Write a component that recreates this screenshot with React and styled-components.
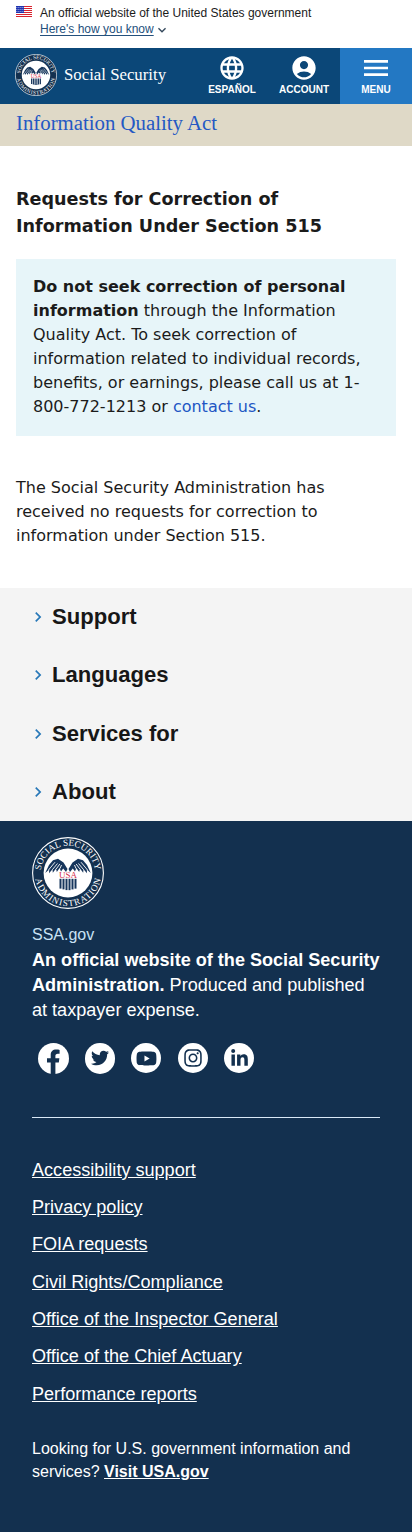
import React from "react";
import styled, { createGlobalStyle } from "styled-components";
import { MdLanguage, MdAccountCircle, MdMenu, MdExpandMore, MdChevronRight } from "react-icons/md";
import { FaTwitter, FaYoutube, FaInstagram, FaLinkedinIn } from "react-icons/fa";

const sans = '"Liberation Sans", Arial, sans-serif';
const serif = '"Liberation Serif", "Times New Roman", serif';
const navy = "#13304f";

const GlobalStyle = createGlobalStyle`
  *, *::before, *::after { box-sizing: border-box; }
  body { margin: 0; background: #fff; color: #1b1b1b; font-family: ${sans}; }
  h1, h2, p, ul { margin: 0; padding: 0; }
  ul { list-style: none; }
  svg { display: block; flex: none; }
`;

const Banner = styled.div`
  display: flex;
  gap: 8px;
  height: 48px;
  padding: 5px 16px 0;
  font-size: 12px;
  line-height: 16px;
`;

const FlagSvg = styled.svg`
  margin-top: 1px;
`;

const HowLink = styled.a`
  display: flex;
  align-items: center;
  height: 16px;
  color: #24507c;
  span {
    text-decoration: underline;
    text-underline-offset: 2px;
  }
  svg {
    margin: 2px 0 0;
    color: #33475b;
  }
`;

const Header = styled.header`
  display: flex;
  height: 56px;
  background: #0b4778;
  color: #fff;
`;

const Brand = styled.a`
  flex: 1;
  display: flex;
  align-items: center;
  gap: 7px;
  padding: 0 0 2px 15px;
  font: 16.8px ${serif};
`;

const NavButton = styled.button`
  display: flex;
  flex-direction: column;
  align-items: center;
  width: 72px;
  padding: 0;
  border: 0;
  background: ${(p) => (p.$active ? "#2378c3" : "transparent")};
  color: #fff;
  font: bold 10px/12px ${sans};
`;

const NavIcon = styled.span`
  display: flex;
  align-items: center;
  justify-content: center;
  height: 32px;
  margin: 4px 0 0;
`;

const TitleBar = styled.div`
  height: 42px;
  padding: 0 16px;
  background: #dfd9c7;
  color: #2458c4;
  font: 20.8px/38px ${serif};
`;

const Main = styled.main`
  height: 442px;
  padding: 40px 16px 0;
  font: 16px/24px "DejaVu Sans", sans-serif;
`;

const Heading = styled.h1`
  font-size: 17.6px;
  line-height: 27px;
`;

const Notice = styled.div`
  margin: 19px 0 40px;
  height: 177px;
  padding: 16px 17px 0;
  background: #e7f5f9;
`;

const TextLink = styled.a`
  color: #2155c4;
`;

const Sections = styled.nav`
  display: flex;
  flex-direction: column;
  height: 233px;
  background: #f4f4f4;
`;

const Section = styled.h2`
  flex: 1;
  display: flex;
  align-items: center;
  gap: 4px;
  padding-left: 28px;
  color: #171717;
  font-size: 22.08px;
  line-height: 26px;
  svg {
    color: #2878b8;
  }
`;

const Footer = styled.footer`
  height: 711px;
  padding: 16px 32px 0;
  background: ${navy};
  color: #fff;
`;

const Domain = styled.p`
  margin-top: 17px;
  color: #c9e1f4;
  font-size: 16px;
  line-height: 18px;
`;

const About = styled.p`
  margin: 4px -4px 0 0;
  font-size: 18.08px;
  line-height: 25px;
`;

const Socials = styled.div`
  display: flex;
  gap: 15.5px;
  height: 31px;
  margin: 20px 0 43px 6px;
`;

const SocialSlot = styled.a`
  width: 31px;
`;

const SocialBadge = styled.span`
  display: flex;
  align-items: center;
  justify-content: center;
  width: ${(p) => p.$size}px;
  height: ${(p) => p.$size}px;
  border-radius: 50%;
  background: #fff;
  color: ${navy};
`;

const Links = styled.ul`
  border-top: 1px solid #d9e8f6;
  padding-top: 33.7px;
`;

const LinkItem = styled.li`
  height: 37.35px;
  font-size: 18.08px;
  line-height: 37.3px;
  a {
    text-decoration: underline;
  }
`;

const UsaGov = styled.p`
  margin-top: 24px;
  font-size: 16px;
  line-height: 23.3px;
  b {
    text-decoration: underline;
  }
`;

const Flag = () => (
  <FlagSvg width="16" height="11" viewBox="0 0 16 11">
    <rect width="16" height="11" fill="#fff" />
    {[0, 2, 4, 6, 8, 10].map((y) => (
      <rect key={y} y={y} width="16" height="1" fill="#d8232f" />
    ))}
    <rect width="8" height="7" fill="#1d33b1" />
    {[1, 3, 5].map((y) =>
      [1, 3, 5, 7].map((x) => (
        <rect key={`${x}-${y}`} x={x - 0.5} y={y} width="0.8" height="0.8" fill="#fff" />
      ))
    )}
  </FlagSvg>
);

const FacebookMark = () => (
  <svg width="31" height="31" viewBox="0 0 31 31">
    <circle cx="15.5" cy="15.5" r="15.5" fill="#fff" />
    <path
      fill={navy}
      d="M12.7 31V19.4H9V15.3H12.7V12C12.7 8.5 14.8 6.6 18.2 6.6C19.6 6.6 20.9 6.8 21.6 6.9V10.7H19.8C18 10.7 17.4 11.7 17.4 12.9V15.3H21.4L20.8 19.4H17.4V31Z"
    />
  </svg>
);

const Seal = ({ size, id }) => (
  <svg width={size} height={size} viewBox="0 0 72 72">
    <defs>
      <path id={`${id}-top`} d="M 9.1 40 A 27.2 27.2 0 1 1 62.9 40" />
      <path id={`${id}-bottom`} d="M 2.8 36 A 33.2 33.2 0 0 0 69.2 36" />
      <g id={`${id}-wing`}>
        <path
          d="M35.5 32 L31.5 25.5 L26 21.8 L21 23.2 L17 28 L13.2 36 L17.2 32.5 L17 36.2 L20.5 32.3 L20.8 35.8 L24 31.6 L24.8 35 L27.6 31 L29 34.4 L31.2 31.6 L34 35 Z"
          fill="#17365c"
        />
        <path
          d="M16.5 33 L23 25.2 M20.3 32.8 L25.5 26.5 M24.2 32 L27.8 27 M28 31.6 L29.5 28"
          fill="none"
          stroke="#fff"
          strokeWidth="0.9"
        />
      </g>
    </defs>
    <circle cx="36" cy="36" r="35.4" fill="#13304f" stroke="#fff" strokeWidth="1.1" />
    <circle cx="36" cy="36" r="24.4" fill="#fff" />
    <g fill="#fff" fontFamily="Liberation Serif, serif" fontSize="9.2">
      <text textAnchor="middle">
        <textPath href={`#${id}-top`} startOffset="50%" textLength="80">SOCIAL SECURITY</textPath>
      </text>
      <text textAnchor="middle">
        <textPath href={`#${id}-bottom`} startOffset="50%" textLength="92">ADMINISTRATION</textPath>
      </text>
    </g>
    <use href={`#${id}-wing`} />
    <use href={`#${id}-wing`} transform="translate(72 0) scale(-1 1)" />
    <text x="36" y="40.6" textAnchor="middle" fontFamily="Liberation Serif, serif" fontSize="9" fill="#d52e4c">USA</text>
    {[-7.6, -4.6, -1.6, 1.4, 4.4, 7.4].map((x) => (
      <path key={x} d={`M${36.1 + x} 41.8 V${53.5 - Math.abs(x) / 4}`} stroke="#17365c" strokeWidth="2" />
    ))}
  </svg>
);

const sections = ["Support", "Languages", "Services for", "About"];
const links = [
  "Accessibility support",
  "Privacy policy",
  "FOIA requests",
  "Civil Rights/Compliance",
  "Office of the Inspector General",
  "Office of the Chief Actuary",
  "Performance reports",
];

export default function App() {
  return (
    <>
      <GlobalStyle />
      <Banner>
        <Flag />
        <div>
          <p>An official website of the United States government</p>
          <HowLink>
            <span>Here's how you know</span>
            <MdExpandMore size={16} />
          </HowLink>
        </div>
      </Banner>
      <Header>
        <Brand>
          <Seal size={42} id="brand" />
          Social Security
        </Brand>
        <NavButton>
          <NavIcon><MdLanguage size={28} /></NavIcon>
          ESPAÑOL
        </NavButton>
        <NavButton>
          <NavIcon><MdAccountCircle size={28} /></NavIcon>
          ACCOUNT
        </NavButton>
        <NavButton $active>
          <NavIcon><MdMenu size={32} /></NavIcon>
          MENU
        </NavButton>
      </Header>
      <TitleBar>Information Quality Act</TitleBar>
      <Main>
        <Heading>Requests for Correction of Information Under Section 515</Heading>
        <Notice>
          <b>Do not seek correction of personal information</b> through the Information Quality Act. To
          seek correction of information related to individual records, benefits, or earnings, please
          call us at 1-800-772-1213 or <TextLink>contact us</TextLink>.
        </Notice>
        <p>
          The Social Security Administration has received no requests for correction to information
          under Section 515.
        </p>
      </Main>
      <Sections>
        {sections.map((name) => (
          <Section key={name}>
            <MdChevronRight size={20} />
            {name}
          </Section>
        ))}
      </Sections>
      <Footer>
        <Seal size={72} id="footer" />
        <Domain>SSA.gov</Domain>
        <About>
          <b>An official website of the Social Security Administration.</b> Produced and published at
          taxpayer expense.
        </About>
        <Socials>
          <SocialSlot><FacebookMark /></SocialSlot>
          <SocialSlot><SocialBadge $size={30.6}><FaTwitter size={18} /></SocialBadge></SocialSlot>
          <SocialSlot><SocialBadge $size={30}><FaYoutube size={21} /></SocialBadge></SocialSlot>
          <SocialSlot><SocialBadge $size={30}><FaInstagram size={20} /></SocialBadge></SocialSlot>
          <SocialSlot><SocialBadge $size={30}><FaLinkedinIn size={19} /></SocialBadge></SocialSlot>
        </Socials>
        <Links>
          {links.map((name) => (
            <LinkItem key={name}><a>{name}</a></LinkItem>
          ))}
        </Links>
        <UsaGov>
          Looking for U.S. government information and services? <b>Visit USA.gov</b>
        </UsaGov>
      </Footer>
    </>
  );
}
